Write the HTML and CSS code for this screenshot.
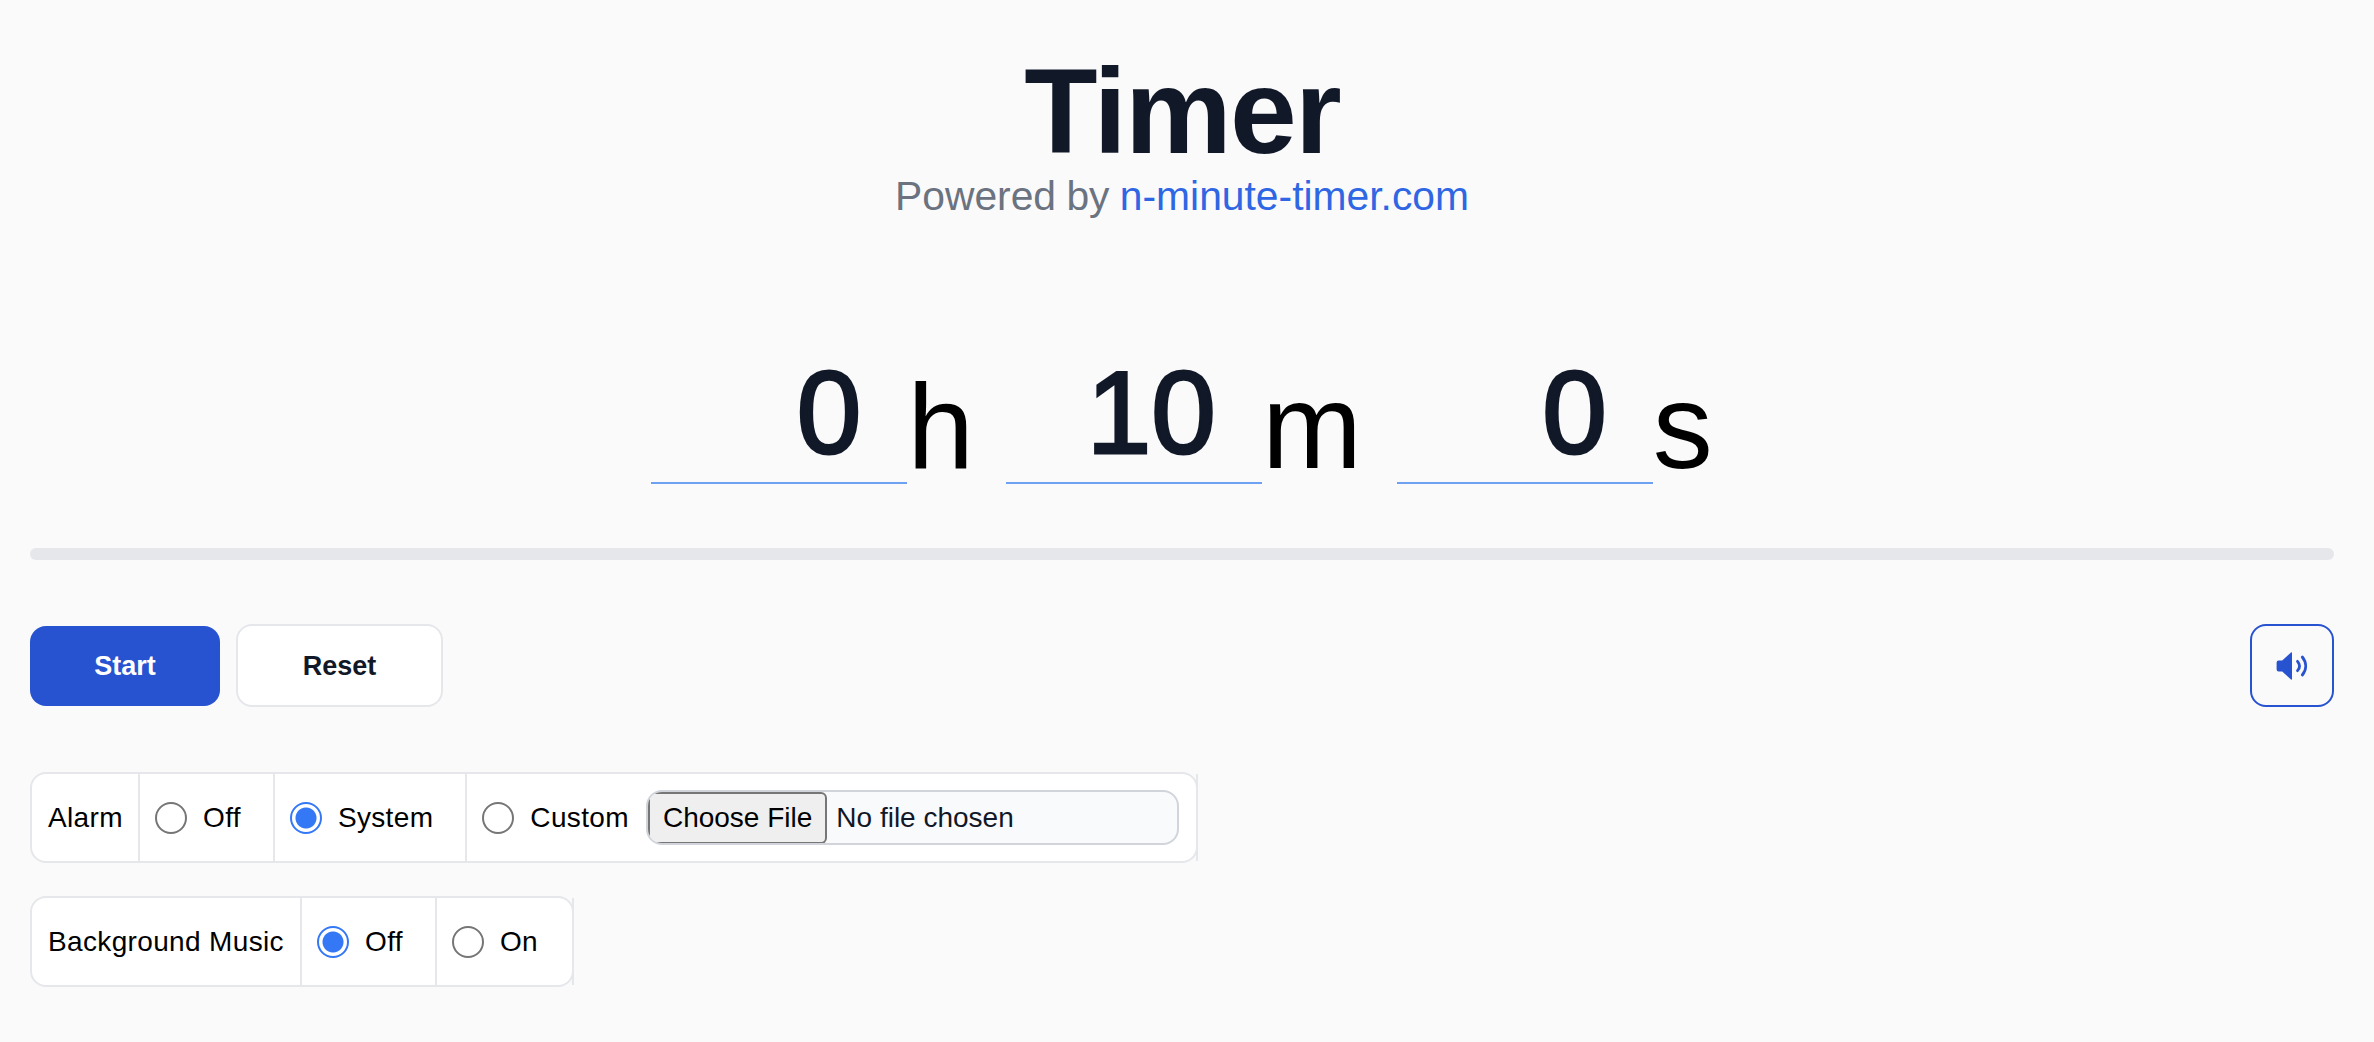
FILE: index.html
```html
<!DOCTYPE html>
<html lang="en">
	<head>
		<meta charset="UTF-8" />
		<meta name="viewport" content="width=device-width, initial-scale=1.0" />
		<title>Timer</title>
		<link rel="stylesheet" href="styles.css">
	</head>
	<body>
		<header class="head">
			<h1 class="title">Timer</h1>
			<p class="powered">Powered by <a href="#">n-minute-timer.com</a></p>
		</header>

		<div class="clock">
			<input class="num" type="number" value="0" aria-label="Hours"><span class="unit unit-h">h</span>
			<input class="num" type="number" value="10" aria-label="Minutes"><span class="unit unit-m">m</span>
			<input class="num" type="number" value="0" aria-label="Seconds"><span class="unit">s</span>
		</div>

		<div class="progress"></div>

		<div class="actions">
			<button class="btn start">Start</button>
			<button class="btn reset">Reset</button>
			<button class="btn sound" aria-label="Sound">
				<svg width="32" height="28" viewBox="0 0 32 28">
					<path d="M15 .4 6.2 8.6H2.5A2 2 0 0 0 .6 10.500v7a2 2 0 0 0 1.900 1.900h3.700L15 27.600c.5.400 1 .100 1-.600V1c0-.700-.500-1-1-.600z" fill="#2853d0"/>
					<path d="M21.500 9.300c2.600 3 2.600 6.400 0 9.400M26.300 5c4.500 5.600 4.500 12.400 0 18" fill="none" stroke="#2853d0" stroke-width="2.800" stroke-linecap="round"/>
				</svg>
			</button>
		</div>

		<div class="options">
			<div class="group">
				<div class="cell alarm-label">Alarm</div>
				<label class="cell"><input class="radio" type="radio" name="alarm">Off</label>
				<label class="cell"><input class="radio" type="radio" name="alarm" checked>System</label>
				<label class="cell last file-cell"><input class="radio" type="radio" name="alarm">Custom<input class="file" type="file"></label>
			</div>
			<div class="group">
				<div class="cell music-label">Background Music</div>
				<label class="cell"><input class="radio" type="radio" name="music" checked>Off</label>
				<label class="cell last on-cell"><input class="radio" type="radio" name="music">On</label>
			</div>
		</div>
	</body>
</html>
```

FILE: styles.css
```css
* {
	box-sizing: border-box;
}
body {
	margin: 0;
	padding: 51px 40px 0 30px;
	background-color: #fafafb;
	font-family: "Liberation Sans", Arial, sans-serif;
	color: #000;
}
.head {
	text-align: center;
}
.title {
	margin: 0;
	font-size: 120px;
	line-height: 120px;
	font-weight: 700;
	letter-spacing: -1.8px;
	color: #111827;
}
.powered {
	margin: 1px 0 0;
	font-size: 40.800px;
	line-height: 48px;
	word-spacing: -1px;
	color: #6b7280;

	a {
		color: #2f66e3;
		text-decoration: none;
	}
}
.clock {
	display: flex;
	justify-content: center;
	align-items: flex-end;
	margin-top: 132px;
}
.num {
	width: 256px;
	height: 132px;
	margin-bottom: 2px;
	padding: 0 31px 9px 0;
	border: none;
	border-bottom: 2px solid #6ea1f2;
	border-radius: 0;
	outline: none;
	background: transparent;
	font-family: inherit;
	font-size: 116px;
	line-height: 120px;
	text-align: right;
	color: #111827;
	-webkit-text-stroke: 3px #111827;
	appearance: textfield;
}
.unit {
	font-size: 120px;
	line-height: 120px;
}
.unit-h {
	margin-right: 32px;
}
.unit-m {
	margin-right: 35px;
}
.progress {
	height: 12px;
	margin-top: 62px;
	border-radius: 6px;
	background-color: #e5e7eb;
}
.actions {
	display: flex;
	align-items: center;
	gap: 16px;
	margin-top: 64px;
}
.btn {
	padding: 2px 0 0;
	border-radius: 16px;
	font-family: inherit;
	font-size: 27px;
	font-weight: 700;
	cursor: pointer;
}
.start {
	width: 190px;
	height: 80px;
	border: none;
	background-color: #2853d0;
	color: #fff;
}
.reset {
	width: 207px;
	height: 83px;
	border: 2px solid #e5e7eb;
	background-color: #fff;
	color: #111827;
}
.sound {
	display: flex;
	align-items: center;
	justify-content: center;
	width: 84px;
	height: 83px;
	margin-left: auto;
	padding: 0;
	border: 2px solid #2853d0;
	background: transparent;
}
.options {
	display: flex;
	flex-direction: column;
	align-items: flex-start;
	gap: 33px;
	margin-top: 65px;
}
.group {
	display: inline-flex;
	height: 91px;
	border: 2px solid #e5e7eb;
	border-radius: 16px;
	background-color: #fff;
	font-size: 28px;
	letter-spacing: 0.35px;
}
.cell {
	display: flex;
	align-items: center;
	padding: 0 0 0 16px;
	border-right: 2px solid #e5e7eb;
}
.alarm-label {
	width: 108px;
}
.music-label {
	width: 270px;
}
label.cell {
	padding: 0 32px 0 15px;
}
.cell.last {
	margin-right: -2px;
}
label.file-cell {
	padding-right: 17px;
}
label.on-cell {
	padding-right: 34px;
}
.radio {
	width: 32px;
	height: 32px;
	margin: 0 16px 0 0;
	border: 2px solid #767676;
	border-radius: 50%;
	background-color: #fff;
	appearance: none;
}
.radio:checked {
	border-color: #3478f6;
	background: radial-gradient(circle, #3478f6 0 10px, #fff 11px);
}
.file {
	width: 533px;
	height: 55px;
	margin-left: 17px;
	border: 2px solid #d1d5db;
	border-radius: 16px;
	background-color: #f9fafb;
	font-family: inherit;
	font-size: 28px;
	color: #111827;
}
.file::file-selector-button {
	height: 52px;
	margin: 0 9px 0 0;
	padding: 0 13px;
	border: 2px solid #767676;
	border-radius: 6px;
	background-color: #efefef;
	font-family: inherit;
	font-size: 28px;
	color: #000;
}
```
